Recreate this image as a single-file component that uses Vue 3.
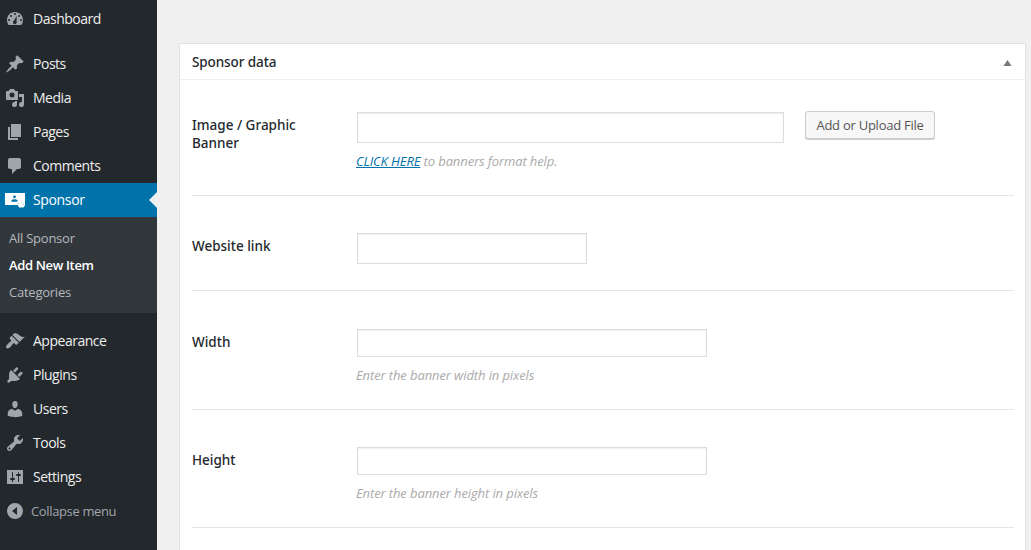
<script setup>
const main = [
  { label: 'Dashboard', icon: 'dashboard' },
  { label: 'Posts', icon: 'posts' },
  { label: 'Media', icon: 'media' },
  { label: 'Pages', icon: 'pages' },
  { label: 'Comments', icon: 'comments' },
]
const lower = [
  { label: 'Appearance', icon: 'appearance' },
  { label: 'Plugins', icon: 'plugins' },
  { label: 'Users', icon: 'users' },
  { label: 'Tools', icon: 'tools' },
  { label: 'Settings', icon: 'settings' },
]
const paths = {
  dashboard: 'M3.76 16h12.480A7.95 7.95 0 0 0 18 11c0-4.420-3.580-8-8-8s-8 3.580-8 8c0 1.890.660 3.640 1.760 5zM10 4a1 1 0 1 1 0 2 1 1 0 0 1 0-2zM6 6a1 1 0 1 1 0 2 1 1 0 0 1 0-2zM14 6a1 1 0 1 1 0 2 1 1 0 0 1 0-2zM4 10a1 1 0 1 1 0 2 1 1 0 0 1 0-2zM16 10a1 1 0 1 1 0 2 1 1 0 0 1 0-2zM11.700 6.800L11.600 12.500a1.900 1.900 0 1 1-2.500-1z',
  posts: 'M10.440 3.020l1.820-1.820 6.360 6.350-1.830 1.820c-1.050-.680-2.480-.570-3.410.360l-.750.750c-.920.930-1.040 2.350-.350 3.410l-1.830 1.820-2.410-2.410-2.800 2.790c-.420.420-3.380 2.710-3.800 2.290s1.860-3.390 2.280-3.810l2.790-2.790L4.100 9.360l1.830-1.820c1.050.690 2.480.570 3.400-.360l.750-.750c.930-.920 1.050-2.350.360-3.410z',
  media: 'M13 11V4c0-.55-.45-1-1-1h-1.670L9 1H5L3.670 3H2c-.55 0-1 .45-1 1v7c0 .55.45 1 1 1h10c.55 0 1-.45 1-1zM7 4.500a2.500 2.500 0 1 1 0 5 2.500 2.500 0 0 1 0-5zM14 6h5v10.500a2.500 2.500 0 1 1-2-2.450V9h-3zM10 14.050V13h2v3.500a2.500 2.500 0 1 1-2-2.450z',
  pages: 'M6 15V2h10v13H6zm-1 1h8v2H3V5h2v11z',
  comments: 'M5 2h9c1.100 0 2 .9 2 2v7c0 1.100-.9 2-2 2h-2l-5 5v-5H5c-1.100 0-2-.9-2-2V4c0-1.100.9-2 2-2z',
  appearance: 'M14.480 11.060L7.410 3.990l1.500-1.500c.5-.56 2.300-.47 3.510.32 1.210.8 1.430 1.280 2.910 2.100 1.180.64 2.450 1.260 4.450.85zm-.71.71L6.700 4.700 4.930 6.470c-.39.39-.39 1.020 0 1.410l1.060 1.060c.39.39.39 1.030 0 1.420-.6.6-1.430 1.110-2.210 1.690-.35.26-.7.53-1.010.84C1.430 14.230.4 16.080 1.400 17.070c.99 1 2.840-.03 4.180-1.360.31-.31.58-.66.85-1.020.57-.78 1.080-1.610 1.690-2.210.39-.39 1.020-.39 1.410 0l1.060 1.060c.39.39 1.020.39 1.410 0z',
  plugins: 'M13.110 4.360L9.870 7.600 8 5.730l3.240-3.240c.35-.34 1.050-.2 1.560.32.52.51.66 1.210.31 1.550zm-8 1.770l.91-1.120 9.010 9.010-1.190.84c-.71.71-2.630 1.160-3.820 1.160H6.140L4.900 17.260c-.59.59-1.540.59-2.120 0-.59-.58-.59-1.530 0-2.120l1.240-1.240v-3.880c0-1.130.4-3.190 1.090-3.890zm7.260 3.970l3.240-3.240c.34-.35 1.040-.21 1.550.31.52.51.66 1.210.31 1.550l-3.240 3.250z',
  users: 'M10 9.250c-2.270 0-2.730-3.440-2.730-3.440C7 4.020 7.820 2 9.970 2c2.160 0 2.980 2.020 2.710 3.810 0 0-.41 3.440-2.680 3.440zm0 2.570L12.720 10c2.390 0 4.520 2.330 4.520 4.530v2.490s-3.650 1.130-7.240 1.130c-3.650 0-7.240-1.130-7.240-1.130v-2.490c0-2.250 1.940-4.480 4.470-4.480z',
  tools: 'M16.680 9.770c-1.340 1.340-3.300 1.670-4.950.99l-5.410 6.520c-.99.99-2.590.99-3.580 0s-.99-2.590 0-3.570l6.520-5.420c-.68-1.650-.35-3.610.99-4.950 1.280-1.280 3.120-1.620 4.720-1.060l-2.890 2.890 2.820 2.820 2.860-2.870c.53 1.580.18 3.390-1.080 4.650zM3.810 16.210c.4.39 1.040.39 1.430 0 .4-.4.4-1.040 0-1.430-.39-.4-1.030-.4-1.430 0-.39.39-.39 1.030 0 1.430z',
  settings: 'M18 17V3H2v14zM8 11h1a1 1 0 0 1 0 2H8v1.500a.5.5 0 0 1-1 0V13H6a1 1 0 0 1 0-2h1V5.500a.5.5 0 0 1 1 0zM13 9h-1a1 1 0 0 1 0-2h1V5.500a.5.5 0 0 1 1 0V7h1a1 1 0 0 1 0 2h-1v5.500a.5.5 0 0 1-1 0z',
}
const fields = [
  { label: 'Image / Graphic Banner', key: 'image', help: ' to banners format help.', link: 'CLICK HERE', button: 'Add or Upload File' },
  { label: 'Website link', key: 'website' },
  { label: 'Width', key: 'width', help: 'Enter the banner width in pixels' },
  { label: 'Height', key: 'height', help: 'Enter the banner height in pixels' },
]
</script>

<template>
  <div class="page">
    <nav class="sidebar">
      <a v-for="m in main" :key="m.icon" class="item" :class="m.icon">
        <svg class="icon" viewBox="0 0 20 20"><path fill-rule="evenodd" :d="paths[m.icon]" /></svg>
        <span>{{ m.label }}</span>
      </a>
      <a class="item current">
        <svg class="icon sponsor-icon" viewBox="0 0 20 16">
          <path fill="#fff" d="M0 1h20v10a1.700 1.700 0 0 1-.6 3 2 2 0 0 1-2.900 1.200 2 2 0 0 1-3.200-1.200 2 2 0 0 1-.8-1H0z" />
          <g fill="#0073aa"><circle cx="9.500" cy="4.800" r="1.400" /><path d="M6.500 9.700V8.300L8.500 7l1 .8 1-.8 2 1.300v1.400z" /></g>
          <g fill="#7db8d6"><circle cx="13" cy="11.700" r=".6" /><circle cx="16.500" cy="11" r=".6" /><circle cx="18.800" cy="12.200" r=".6" /></g>
        </svg>
        <span>Sponsor</span>
      </a>
      <div class="submenu">
        <a>All Sponsor</a>
        <a class="active">Add New Item</a>
        <a>Categories</a>
      </div>
      <a v-for="m in lower" :key="m.icon" class="item" :class="m.icon">
        <svg class="icon" viewBox="0 0 20 20"><path fill-rule="evenodd" :d="paths[m.icon]" /></svg>
        <span>{{ m.label }}</span>
      </a>
      <a class="item collapse">
        <svg class="icon" viewBox="0 0 20 20"><path fill-rule="evenodd" d="M10 2a8 8 0 1 1 0 16 8 8 0 0 1 0-16zM12 6l-5 4 5 4z" /></svg>
        <span>Collapse menu</span>
      </a>
    </nav>
    <main class="content">
      <section class="box">
        <header class="head">
          <h2>Sponsor data</h2>
          <svg class="toggle" viewBox="0 0 8 6"><path d="M4 0l4 6H0z" /></svg>
        </header>
        <div class="fields">
          <div v-for="f in fields" :key="f.key" class="field" :class="f.key">
            <label :for="f.key">{{ f.label }}</label>
            <div class="control">
              <div class="line">
                <input :id="f.key" type="text" />
                <button v-if="f.button" type="button">{{ f.button }}</button>
              </div>
              <p v-if="f.help"><a v-if="f.link">{{ f.link }}</a>{{ f.help }}</p>
            </div>
          </div>
        </div>
      </section>
    </main>
  </div>
</template>

<style>
body { background: #f0f0f0; overflow: hidden; }
</style>
<style scoped>
* { box-sizing: border-box; }
.page { display: flex; width: 1031px; height: 550px; overflow: hidden; background: #f0f0f0; font-family: "Open Sans", "Noto Sans", sans-serif; font-size: 13px; color: #23282d; }
.sidebar { width: 157px; flex: none; background: #23282d; padding-top: 2px; }
.item { display: flex; align-items: center; height: 34px; padding-left: 5px; color: #eee; font-size: 14px; letter-spacing: -0.48px; position: relative; }
.item span { padding-bottom: 2px; }
.icon { width: 20px; height: 20px; margin-right: 8px; fill: #a0a5aa; flex: none; }
.item.dashboard { margin-bottom: 11px; }
.current { background: #0073aa; color: #fff; letter-spacing: -0.35px; }
.current::after { content: ""; position: absolute; right: 0; top: 9px; border: 8px solid transparent; border-left: 0; border-right-color: #f0f0f0; }
.sponsor-icon { height: 16px; }
.submenu { background: #32373c; height: 96px; padding: 8px 0 0 9px; margin-bottom: 11px; }
.submenu a { display: block; height: 27px; line-height: 27px; color: #b4b9be; letter-spacing: -0.24px; }
.submenu .active { color: #fff; font-weight: 600; letter-spacing: -0.35px; }
.collapse { color: #a0a5aa; font-size: 13px; letter-spacing: -0.36px; }
.collapse span { padding-bottom: 0; }
.collapse .icon { margin-right: 6px; }
.content { flex: 1; padding: 43px 0 0 22px; }
.box { width: 847px; height: 560px; background: #fff; border: 1px solid #e2e2e2; }
.head { height: 36px; border-bottom: 1px solid #eee; display: flex; align-items: center; justify-content: space-between; padding: 0 13px 0 12px; }
h2 { margin: 0; font-family: "Noto Sans", "Open Sans", sans-serif; font-size: 13.5px; font-weight: 500; line-height: 20px; letter-spacing: -0.1px; }
.toggle { width: 9px; height: 6px; fill: #72777c; margin-top: 3px; }
.fields { padding: 0 11px 0 12px; }
.field { display: flex; border-bottom: 1px solid #e5e5e5; }
.field.image { height: 116px; padding-top: 32px; }
.field.website { height: 95px; padding-top: 37px; }
.field.width { height: 119px; padding-top: 38px; }
.field.height { height: 118px; padding-top: 37px; }
label { width: 165px; padding: 4px 40px 0 0; font-family: "Noto Sans", "Open Sans", sans-serif; font-size: 13.5px; font-weight: 500; line-height: 18px; }
input { display: block; width: 350px; height: 28px; border: 1px solid #ddd; box-shadow: inset 0 1px 2px rgba(0,0,0,.07); padding: 0; outline: 0; background: #fff; }
.image input { width: 427px; height: 31px; }
.website input { width: 230px; height: 31px; }
.line { display: flex; }
button { width: 130px; height: 28px; margin: -1px 0 0 21px; padding: 0; border: 1px solid #ccc; border-radius: 3px; background: #f7f7f7; box-shadow: 0 1px 0 #ccc; color: #555; font: 13px "Open Sans", sans-serif; letter-spacing: -0.25px; }
p { margin: 9px 0 0 -1px; font-size: 13px; line-height: 19px; font-style: italic; color: #aaa; letter-spacing: -0.11px; }
p a { color: #0073aa; text-decoration: underline; }
</style>
